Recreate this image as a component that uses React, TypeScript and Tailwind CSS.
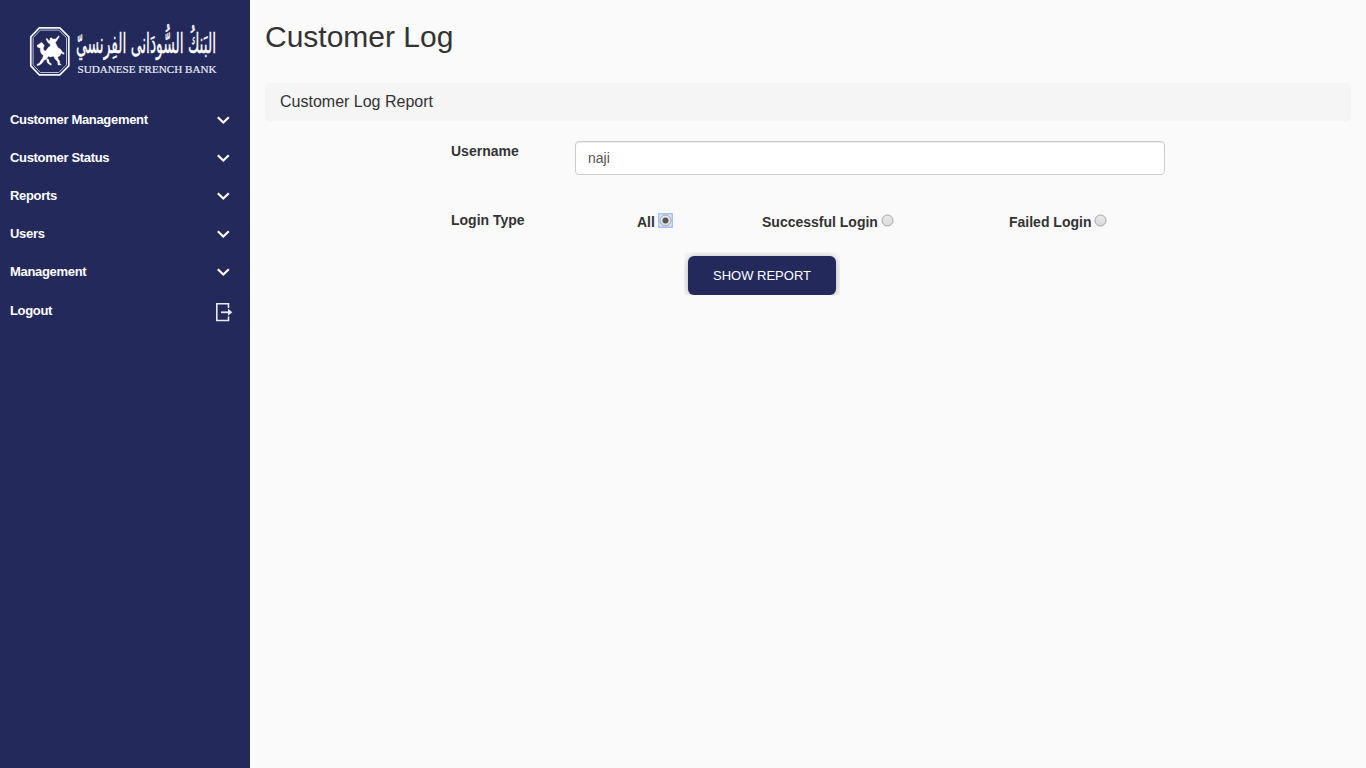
import { useState } from "react";

const menuItems = ["Customer Management", "Customer Status", "Reports", "Users", "Management"];

function BankLogo() {
  return (
    <svg width="200" height="58" viewBox="0 0 200 58" className="block overflow-visible" aria-label="Sudanese French Bank">
      <path d="M11.300 2.800h20.500l9 9v29l-9 9H11.300l-8.500-9v-29z" fill="none" stroke="#f4f4fa" strokeWidth="1.700" />
      <path d="M12.300 5.100h18.500l7.700 7.700v27l-7.700 7.700H12.300l-7.200-7.700v-27z" fill="none" stroke="#b9bcd6" strokeWidth="1" />
      <g transform="translate(-3 -5) scale(.3333)" fill="#fff" stroke="#fff" strokeWidth="1">
        <path d="M36 76L44 71L49 67L54 71L58 77L55 83L56 91L61 93L66 88L70 82L76 79L75 72L69 68L63 57L66 55L72 63L75 60L75 55L79 53L84 57L92 57L101 47L103 50L95 63L91 67L96 78L100 84L107 88L112 96L118 99L116 103L108 100L105 107L98 111L100 118L104 123L104 130L109 135L99 135L98 125L90 117L86 109L76 111L70 109L65 117L57 121L51 130L44 135L36 137L36 133L43 130L48 121L53 114L55 106L49 101L46 93L46 84L38 82Z" />
        <path d="M64 115L72 119L72 126L80 132L77 136L67 128Z" />
      </g>
      <text x="48" y="28" textLength="140" lengthAdjust="spacingAndGlyphs" transform="translate(0 -15.500) scale(1 1.550)" fill="#fff" stroke="#fff" strokeWidth="0.250" className="font-['DejaVu_Sans',sans-serif] text-[18px] font-normal">
        البَنكُ السُّودَانى الفِرنسيّ
      </text>
      <text x="49.500" y="48" textLength="139" lengthAdjust="spacingAndGlyphs" fill="#e8e9f3" stroke="#e8e9f3" strokeWidth="0.200" className="font-['Liberation_Serif',serif] text-[11px] font-normal">
        SUDANESE FRENCH BANK
      </text>
    </svg>
  );
}

function Chevron() {
  return (
    <svg width="14" height="10" viewBox="0 0 14 10" className="block">
      <path d="M1.800 2.300l5.500 5.200 5.500-5.200" fill="none" stroke="#fffbee" strokeWidth="2.200" />
    </svg>
  );
}

function LogoutIcon() {
  return (
    <svg width="18" height="20" viewBox="0 0 18 20" className="block">
      <path d="M13.500 6V1.800H1.800v16.700h11.700V14.500" fill="none" stroke="#e9eaf2" strokeWidth="1.600" />
      <path d="M6 10.300h9" fill="none" stroke="#e9eaf2" strokeWidth="1.800" />
      <path d="M13 6.800v7l4.300-3.500z" fill="#e9eaf2" />
    </svg>
  );
}

function Radio({ label, checked, onChange }: { label: string; checked: boolean; onChange: () => void }) {
  return (
    <label className="flex h-5 cursor-pointer items-center">
      <span>{label}</span>
      <input type="radio" name="loginType" className="sr-only" checked={checked} onChange={onChange} />
      <span className={checked ? "mb-1 ml-[3px] flex size-[15px] items-center justify-center rounded-[1px] bg-[#e3e7ef] shadow-[inset_0_0_0_1.5px_#a1c2fa]" : "mb-1 ml-0.5 flex size-[15px] items-center justify-center"}>
        <svg width="13" height="13" viewBox="0 0 13 13" className="shrink-0">
          <defs>
            <linearGradient id="radioFill" x1="0" y1="0" x2="0" y2="1">
              <stop stopColor="#e9e9e9" />
              <stop offset="1" stopColor="#dadada" />
            </linearGradient>
          </defs>
          <circle cx="6.500" cy="6.500" r="5.500" fill="url(#radioFill)" stroke="#a5a5a5" />
          {checked && <circle cx="6.500" cy="6.500" r="3" fill="#555" />}
        </svg>
      </span>
    </label>
  );
}

export default function App() {
  const [username, setUsername] = useState("naji");
  const [type, setType] = useState("all");
  return (
    <div className="flex h-screen bg-[#fafafa] font-['Liberation_Sans',Arial,sans-serif] text-[#333]">
      <aside className="w-[250px] shrink-0 bg-[#24295c] text-[13px] font-bold tracking-[-0.32px] text-white">
        <div className="h-[100px] pt-[25px] pl-7 tracking-normal">
          <BankLogo />
        </div>
        <nav>
          {menuItems.map((item) => (
            <a key={item} className="flex h-[38px] items-center justify-between pr-5 pl-2.5">
              <span className="pt-0.5">{item}</span>
              <span className="pt-0.5"><Chevron /></span>
            </a>
          ))}
          <a className="flex h-10 items-center justify-between pr-[17px] pl-2.5">
            <span className="pt-0.5">Logout</span>
            <span className="pt-1"><LogoutIcon /></span>
          </a>
        </nav>
      </aside>
      <main className="flex-1 px-[15px] pt-5">
        <h1 className="text-[30px] leading-[33px]">Customer Log</h1>
        <section className="mt-[30px]">
          <h2 className="h-[38px] rounded bg-[#f5f5f5] pl-[15px] text-base leading-[37px]">Customer Log Report</h2>
          <form className="pt-5 pl-[186px] text-sm leading-5 font-bold" onSubmit={(e) => e.preventDefault()}>
            <div className="flex h-[34px]">
              <label className="w-[124px]" htmlFor="username">Username</label>
              <input
                id="username"
                value={username}
                onChange={(e) => setUsername(e.target.value)}
                className="h-[34px] w-[590px] rounded border border-[#ccc] bg-white px-3 font-normal text-[#555] shadow-[inset_0_1px_1px_rgba(0,0,0,0.075)] outline-none"
              />
            </div>
            <div className="mt-[35px] flex">
              <span className="w-[186px]">Login Type</span>
              <div className="w-[125px] pt-0.5"><Radio label="All" checked={type === "all"} onChange={() => setType("all")} /></div>
              <div className="w-[247px] pt-0.5"><Radio label="Successful Login" checked={type === "success"} onChange={() => setType("success")} /></div>
              <div className="pt-0.5"><Radio label="Failed Login" checked={type === "failed"} onChange={() => setType("failed")} /></div>
            </div>
            <div className="mt-5 ml-[233px] h-[43px] w-[156px] overflow-hidden pt-1 pl-1">
              <button className="block h-[39px] w-[148px] rounded-md bg-[#24295c] text-[13px] font-normal text-white shadow-[0_1px_8px_rgba(0,0,0,0.3)]">
                SHOW REPORT
              </button>
            </div>
          </form>
        </section>
      </main>
    </div>
  );
}
